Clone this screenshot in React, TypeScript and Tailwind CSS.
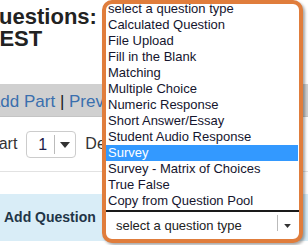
import React from 'react';

const questionTypes = [
  'select a question type',
  'Calculated Question',
  'File Upload',
  'Fill in the Blank',
  'Matching',
  'Multiple Choice',
  'Numeric Response',
  'Short Answer/Essay',
  'Student Audio Response',
  'Survey',
  'Survey - Matrix of Choices',
  'True False',
  'Copy from Question Pool',
];

const Caret: React.FC<{ className?: string }> = ({ className }) => (
  <svg viewBox="0 0 10 6" className={className}>
    <path d="M0 0h10L5 6z" fill="currentColor" />
  </svg>
);

export default function App() {
  const selected = 'Survey';

  return (
    <div className="relative w-[308px] h-[245px] overflow-hidden bg-white font-['Liberation_Sans',Arial,sans-serif]">
      {/* page behind the dropdown */}
      <div className="h-[84px] pt-[6px] pl-0">
        <h1 className="ml-[-18px] text-[22px] leading-[22px] font-bold text-[#222] whitespace-nowrap">
          Questions:
          <br />
          <span className="ml-[4px]">TEST</span>
        </h1>
      </div>

      <div className="h-[33px] pt-[9px] bg-[#d0d0d0] border-b border-[#c4c4c4] text-[17px] leading-[18px] whitespace-nowrap">
        <span className="ml-[-11px] text-[#3a6fae]">Add Part</span>
        <span className="text-[#222]"> | </span>
        <span className="text-[#3a6fae]">Preview</span>
      </div>

      <div className="h-[55px] flex items-center gap-[9px] border-b border-[#e2e2e2] text-[16px] text-[#333] whitespace-nowrap">
        <span className="ml-[-12px]">Part</span>
        <div className="flex items-center w-[50px] h-[27px] border border-[#ccc] rounded-[4px] mt-[1px]">
          <span className="w-[27px] pl-[11px] text-[#1c1c48]">1</span>
          <span className="w-px h-[19px] bg-[#bbb]" />
          <Caret className="w-[10px] h-[6px] ml-[5px] text-[#333]" />
        </div>
        <span>Default</span>
      </div>

      <div className="h-[22px]" />

      <div className="h-[47px] flex items-center pl-[4px] bg-[#d9edf7]">
        <span className="text-[14px] font-bold text-[#1f3547] whitespace-nowrap">Add Question</span>
      </div>

      {/* open question type dropdown */}
      <div className="absolute left-[102px] top-0 w-[201px] h-[243px] rounded-[10px] border-4 border-[#e07d3c] bg-white shadow-[2px_2px_3px_rgba(0,0,0,0.35)] overflow-hidden flex flex-col">
        <ul className="mt-[-3px] text-[13px] leading-[16px] text-[#15152e]">
          {questionTypes.map((type) => (
            <li
              key={type}
              className={
                type === selected
                  ? 'h-[16px] pl-[2px] mr-[1px] bg-[#3399ff] text-white whitespace-nowrap'
                  : 'h-[16px] pl-[2px] whitespace-nowrap'
              }
            >
              {type}
            </li>
          ))}
        </ul>
        <div className="mt-[1px] h-[2px] bg-[#1a1a1a]" />
        <div className="flex-1 flex items-center pl-[10px] pr-[8px] text-[13px] text-[#222]">
          <span className="flex-1 whitespace-nowrap">select a question type</span>
          <span className="w-px h-[16px] bg-[#bbb] mt-[-6px]" />
          <Caret className="w-[7px] h-[4px] ml-[6px] text-[#333]" />
        </div>
      </div>
    </div>
  );
}
